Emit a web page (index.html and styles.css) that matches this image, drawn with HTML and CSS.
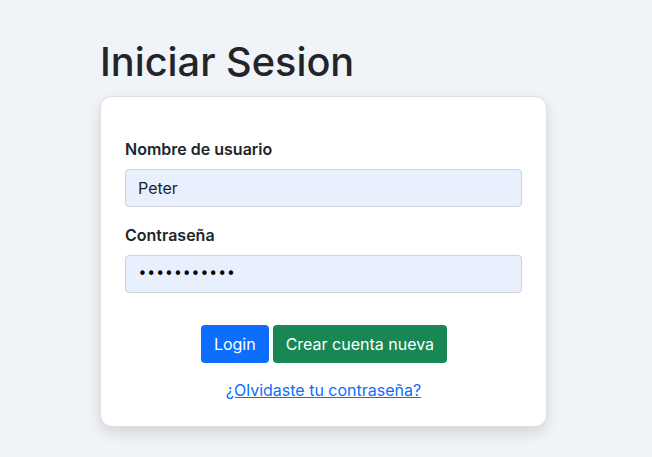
FILE: index.html
```html
<!DOCTYPE html>
<html lang="es">
<head>
<meta charset="utf-8">
<title>Iniciar Sesion</title>
<link rel="stylesheet" href="styles.css">
</head>
<body>
<main class="page">
  <h1 class="title">Iniciar Sesion</h1>
  <div class="card">
    <form class="form">
      <div class="field">
        <label class="label" for="user">Nombre de usuario</label>
        <input class="input" id="user" type="text" value="Peter">
      </div>
      <div class="field">
        <label class="label" for="pass">Contraseña</label>
        <input class="input pass" id="pass" type="password" value="12345678901">
      </div>
      <div class="actions">
        <button class="btn btn-primary" type="button">Login</button>
        <button class="btn btn-success" type="button">Crear cuenta nueva</button>
      </div>
      <div class="forgot"><a href="#" class="link">¿Olvidaste tu contraseña?</a></div>
    </form>
  </div>
</main>
</body>
</html>
```

FILE: styles.css
```css
* { box-sizing: border-box; }
html, body { margin: 0; padding: 0; }
body {
  background: #f0f3f8;
  font-family: Inter, "Noto Sans", sans-serif;
  color: #212529;
  font-size: 16px;
  line-height: 1.5;
  min-height: 457px;
}
.page {
  width: 448px;
  margin-left: 100px;
  padding-top: 39px;
  padding-bottom: 30px;
}
.title {
  font-size: 39.7px;
  font-weight: 500;
  line-height: 1.2;
  margin: 0 0 9px 0;
}
.card {
  background: #fff;
  border: 1px solid rgba(0,0,0,0.12);
  border-radius: 12px;
  box-shadow: 0 6px 14px rgba(0,0,0,0.12);
  padding: 40px 24px 24px 24px;
  width: 447px;
}
.form { display: flex; flex-direction: column; }
.field { display: flex; flex-direction: column; margin-bottom: 16px; }
.field:nth-child(2) { margin-bottom: 32px; }
.label {
  font-weight: 600;
  font-size: 16px;
  line-height: 24px;
  margin-bottom: 8px;
}
.input {
  height: 38px;
  border: 1px solid #ced4da;
  border-radius: 4px;
  background: #e8f0fe;
  font-family: inherit;
  font-size: 16px;
  color: #212529;
  padding: 6px 12px;
  outline: none;
}
.pass { color: #000; letter-spacing: 0; font-family: "DejaVu Sans", sans-serif; font-size: 15px; }
.actions { display: flex; justify-content: center; gap: 4px; padding-left: 1px; }
.btn {
  height: 38px;
  border: none;
  border-radius: 4px;
  color: #fff;
  font-family: inherit;
  font-size: 16px;
  padding: 6px 13px;
  line-height: 24px;
}
.btn-primary { background: #0d6efd; }
.btn-success { background: #198754; }
.forgot { text-align: center; margin-top: 15px; line-height: 24px; }
.link { color: #0d6efd; text-decoration: underline; font-size: 16px; }
```
